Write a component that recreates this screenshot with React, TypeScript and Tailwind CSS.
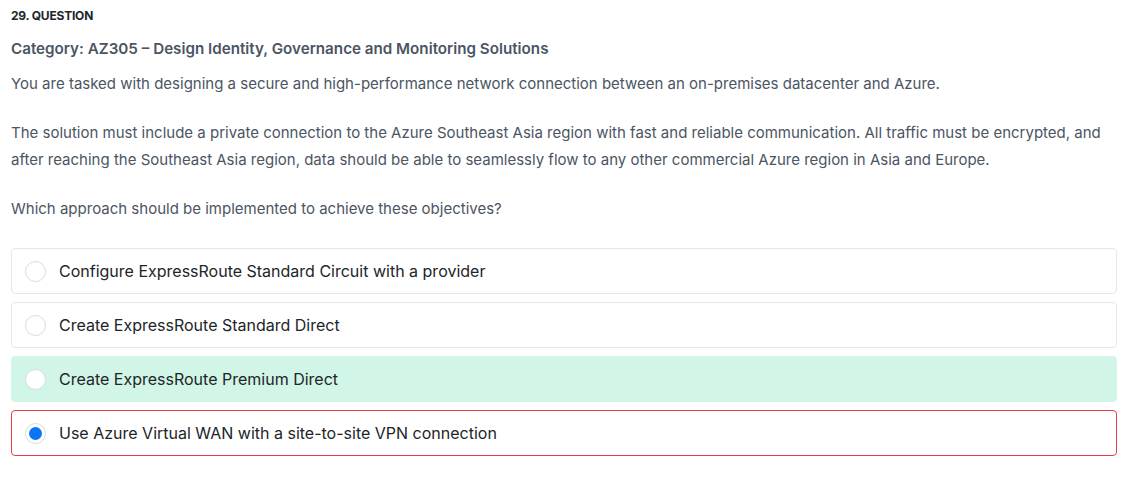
import React from "react";

const options = [
  { text: "Configure ExpressRoute Standard Circuit with a provider", state: "none" },
  { text: "Create ExpressRoute Standard Direct", state: "none" },
  { text: "Create ExpressRoute Premium Direct", state: "correct" },
  { text: "Use Azure Virtual WAN with a site-to-site VPN connection", state: "wrong" },
];

export default function App() {
  return (
    <div className="w-[1139px] h-[481px] bg-white px-[11px] pt-[10px]" style={{ fontFamily: "Inter, 'Noto Sans', sans-serif" }}>
      <div className="text-[12px] font-bold text-[#212529] leading-[12px] tracking-[-0.2px]">29. QUESTION</div>
      <div className="mt-[17px] text-[15.2px] font-semibold text-[#4b5563] leading-[20px]">
        Category: AZ305 – Design Identity, Governance and Monitoring Solutions
      </div>
      <div className="mt-[11px] text-[15px] text-[#4b5563] leading-[27px]">
        <p>You are tasked with designing a secure and high-performance network connection between an on-premises datacenter and Azure.</p>
        <p className="mt-[22px]">
          The solution must include a private connection to the Azure Southeast Asia region with fast and reliable communication. All traffic must be encrypted, and after reaching the Southeast Asia region, data should be able to seamlessly flow to any other commercial Azure region in Asia and Europe.
        </p>
        <p className="mt-[22px]">Which approach should be implemented to achieve these objectives?</p>
      </div>
      <div className="mt-[26px] flex flex-col gap-[8px] w-[1106px]">
        {options.map((o, i) => (
          <div
            key={i}
            className={
              "h-[46px] rounded-[4px] flex items-center px-[13px] " +
              (o.state === "correct"
                ? "bg-[#d1f5e6] border border-[#d1f5e6]"
                : o.state === "wrong"
                ? "bg-white border border-[#e53e4a]"
                : "bg-white border border-[#e6e6e6]")
            }
          >
            <div className="w-[21px] h-[21px] rounded-full border border-[#d6dbe1] bg-white flex items-center justify-center shrink-0">
              {o.state === "wrong" && <div className="w-[13px] h-[13px] rounded-full bg-[#0a76f6]" />}
            </div>
            <span className="ml-[13px] text-[16px] text-[#212529]">{o.text}</span>
          </div>
        ))}
      </div>
    </div>
  );
}
